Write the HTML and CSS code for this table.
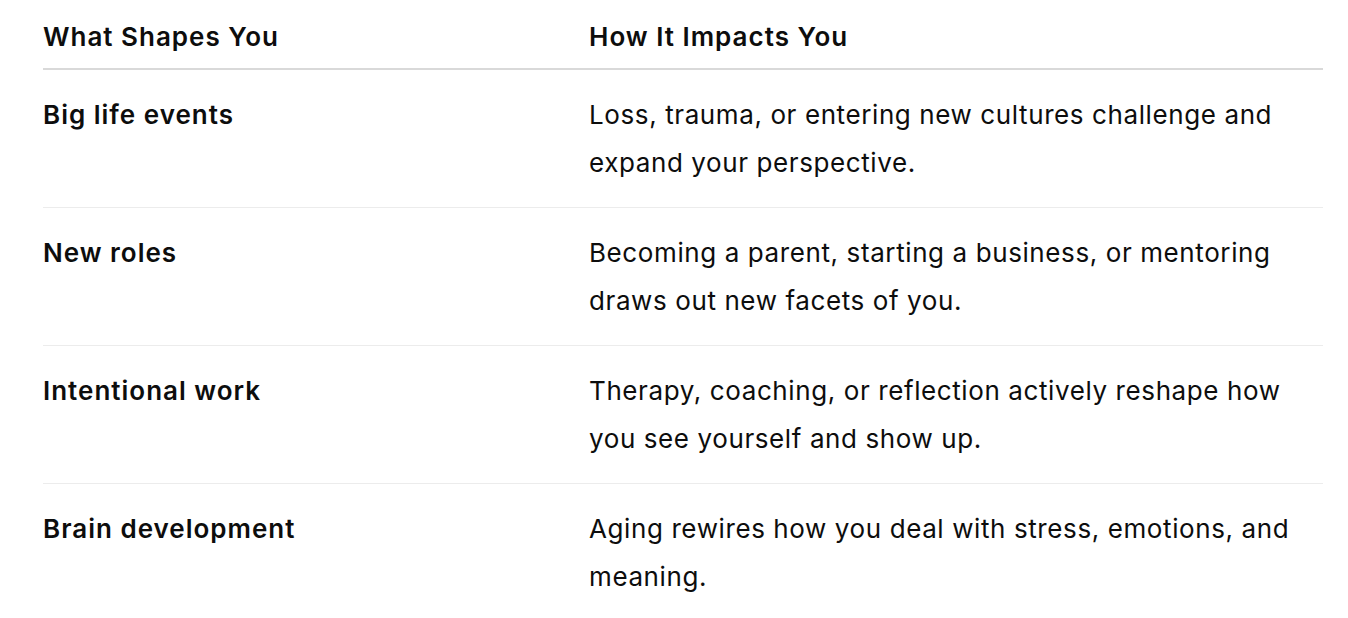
FILE: index.html
```html
<!DOCTYPE html>
<html>
<head>
<meta charset="utf-8">
<link rel="stylesheet" href="styles.css">
</head>
<body>
<div class="wrap">
<table class="grid">
<colgroup><col class="c1"><col class="c2"></colgroup>
<thead>
<tr><th>What Shapes You</th><th>How It Impacts You</th></tr>
</thead>
<tbody>
<tr><td class="k">Big life events</td><td>Loss, trauma, or entering new cultures challenge and expand your perspective.</td></tr>
<tr><td class="k">New roles</td><td>Becoming a parent, starting a business, or mentoring draws out new facets of you.</td></tr>
<tr><td class="k">Intentional work</td><td>Therapy, coaching, or reflection actively reshape how you see yourself and show up.</td></tr>
<tr><td class="k">Brain development</td><td>Aging rewires how you deal with stress, emotions, and meaning.</td></tr>
</tbody>
</table>
</div>
</body>
</html>
```
FILE: styles.css
```css
html, body { margin: 0; padding: 0; background: #fff; }
body { font-family: Inter, "Noto Sans", sans-serif; color: #0d0d0d; }
.wrap { padding: 0 25px 0 43px; }
.grid { width: 100%; border-collapse: collapse; table-layout: fixed; font-size: 26px; line-height: 48px; letter-spacing: 0.6px; }
.c1 { width: 546px; }
th { text-align: left; font-weight: 600; letter-spacing: 1px; padding: 13px 0 7px 0; border-bottom: 2px solid #d9d9d9; vertical-align: top; }
td { padding: 21px 0 20px 0; vertical-align: top; border-bottom: 1px solid #ececec; }
td.k { font-weight: 600; letter-spacing: 1px; }
tbody tr:last-child td { border-bottom: none; }
```
